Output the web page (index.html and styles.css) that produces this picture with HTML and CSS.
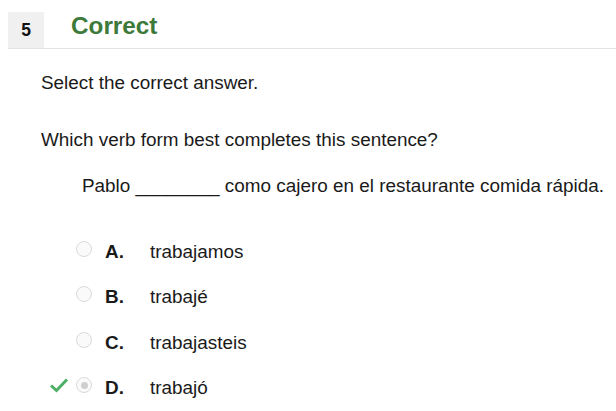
FILE: index.html
```html
<!DOCTYPE html>
<html>
<head>
<meta charset="utf-8">
<link rel="stylesheet" href="styles.css">
</head>
<body>
<div class="header">
  <div class="num">5</div>
  <div class="status">Correct</div>
</div>
<div class="content">
  <p class="instr">Select the correct answer.</p>
  <p class="question">Which verb form best completes this sentence?</p>
  <p class="sentence">Pablo ________ como cajero en el restaurante comida rápida.</p>
  <ul class="options">
    <li class="opt"><span class="mark"></span><span class="radio"></span><span class="letter">A.</span><span class="ans">trabajamos</span></li>
    <li class="opt"><span class="mark"></span><span class="radio"></span><span class="letter">B.</span><span class="ans">trabajé</span></li>
    <li class="opt"><span class="mark"></span><span class="radio"></span><span class="letter">C.</span><span class="ans">trabajasteis</span></li>
    <li class="opt"><span class="mark"><svg width="20" height="16" viewBox="0 0 20 16"><path d="M2 8.5 L7.5 13.5 L18 2.5" fill="none" stroke="#4caf63" stroke-width="3"/></svg></span><span class="radio checked"></span><span class="letter">D.</span><span class="ans">trabajó</span></li>
  </ul>
</div>
</body>
</html>
```
FILE: styles.css
```css
html, body {
  margin: 0;
  padding: 0;
  background: #fff;
}
body {
  font-family: "Liberation Sans", Arial, sans-serif;
  color: #1a1a1a;
  padding: 12px 0 0 8px;
}
.header {
  display: flex;
  align-items: center;
  border-bottom: 1px solid #e3e3e3;
  height: 36px;
}
.num {
  width: 36px;
  height: 36px;
  background: #f0f0f0;
  display: flex;
  align-items: center;
  justify-content: center;
  font-weight: bold;
  font-size: 17.5px;
  color: #111;
}
.status {
  margin-left: 27px;
  font-size: 24.3px;
  font-weight: bold;
  color: #3d7a3a;
  margin-top: -8px;
}
.content {
  padding-left: 33px;
  font-size: 18.9px;
}
.content p {
  margin: 0;
}
.instr {
  margin-top: 23px !important;
}
.question {
  margin-top: 35px !important;
}
.sentence {
  margin-top: 24px !important;
  padding-left: 41px;
}
.options {
  list-style: none;
  margin: 32px 0 0 0;
  padding: 0;
}
.opt {
  display: flex;
  align-items: center;
  height: 45.5px;
}
.mark {
  width: 27px;
  display: flex;
  align-items: center;
  margin-left: 8px;
  margin-top: -6px;
}
.radio {
  width: 16px;
  height: 16px;
  border-radius: 50%;
  border: 1px solid #dadada;
  background: #fafafa;
  box-sizing: border-box;
  margin-top: -6px;
  position: relative;
}
.radio.checked::after {
  content: "";
  position: absolute;
  left: 3.5px;
  top: 3.5px;
  width: 7px;
  height: 7px;
  border-radius: 50%;
  background: #cfcfcf;
}
.letter {
  font-weight: bold;
  margin-left: 13px;
  width: 45px;
}
```
